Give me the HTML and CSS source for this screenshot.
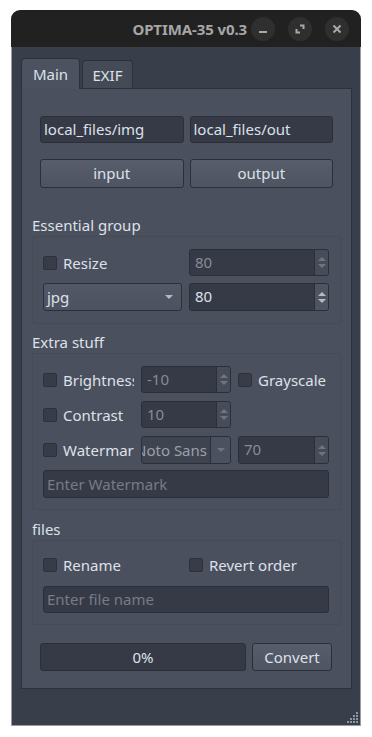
FILE: index.html
```html
<!DOCTYPE html>
<html>
<head>
<meta charset="utf-8">
<link rel="stylesheet" href="styles.css">
</head>
<body>
<div class="window">
  <div class="titlebar">
    <span class="title">OPTIMA-35 v0.3</span>
    <div class="wbtns">
      <span class="wbtn"><svg width="24" height="24" viewBox="0 0 24 24"><rect x="8" y="14" width="8" height="2" fill="#a9a9a9"/></svg></span>
      <span class="wbtn"><svg width="24" height="24" viewBox="0 0 24 24"><path d="M12 8.5h3.5V12M12 15.5H8.5V12" fill="none" stroke="#a9a9a9" stroke-width="2"/></svg></span>
      <span class="wbtn"><svg width="24" height="24" viewBox="0 0 24 24"><path d="M8.5 8.5l7 7M15.5 8.5l-7 7" stroke="#a9a9a9" stroke-width="2"/></svg></span>
    </div>
  </div>
  <div class="body">
    <div class="tabs">
      <div class="tab active">Main</div>
      <div class="tab">EXIF</div>
    </div>
    <div class="panel">
      <div class="row2 pad8">
        <div class="field">local_files/img</div>
        <div class="field">local_files/out</div>
      </div>
      <div class="row2 pad8 btnrow">
        <div class="btn">input</div>
        <div class="btn">output</div>
      </div>

      <div class="glabel first">Essential group</div>
      <div class="gframe ess">
        <div class="grid2 h27">
          <label class="check"><span class="box"></span><span class="ctext">Resize</span></label>
          <div class="spin disabled"><span class="sval">80</span><span class="arrows"><i class="up"></i><i class="down"></i></span></div>
        </div>
        <div class="grid2 h28">
          <div class="combo"><span class="cval">jpg</span><i class="carrow"></i></div>
          <div class="spin"><span class="sval">80</span><span class="arrows"><i class="up"></i><i class="down"></i></span></div>
        </div>
      </div>

      <div class="glabel">Extra stuff</div>
      <div class="gframe extra">
        <div class="grid3 h27">
          <label class="check"><span class="box"></span><span class="ctext">Brightness</span></label>
          <div class="spin disabled"><span class="sval">-10</span><span class="arrows"><i class="up"></i><i class="down"></i></span></div>
          <label class="check"><span class="box"></span><span class="ctext">Grayscale</span></label>
        </div>
        <div class="grid3 h27">
          <label class="check"><span class="box"></span><span class="ctext">Contrast</span></label>
          <div class="spin disabled"><span class="sval">10</span><span class="arrows"><i class="up"></i><i class="down"></i></span></div>
        </div>
        <div class="grid3 h28 g6">
          <label class="check"><span class="box"></span><span class="ctext">Watermark</span></label>
          <div class="combo disabled"><span class="cclip"><span>Noto Sans</span></span><span class="cbtn"><i class="carrow"></i></span></div>
          <div class="spin disabled"><span class="sval">70</span><span class="arrows"><i class="up"></i><i class="down"></i></span></div>
        </div>
        <div class="field wide h28 placeholder">Enter Watermark</div>
      </div>

      <div class="glabel files-label">files</div>
      <div class="gframe files">
        <div class="grid2 h27">
          <label class="check"><span class="box"></span><span class="ctext">Rename</span></label>
          <label class="check"><span class="box"></span><span class="ctext">Revert order</span></label>
        </div>
        <div class="field wide placeholder">Enter file name</div>
      </div>

      <div class="bottomrow pad8">
        <div class="progress">0%</div>
        <div class="btn convert">Convert</div>
      </div>
    </div>
    <svg class="grip" width="12" height="12" viewBox="0 0 12 12" fill="#8f95a3">
      <rect x="9" y="0" width="2" height="2"/>
      <rect x="6" y="3" width="2" height="2"/><rect x="9" y="3" width="2" height="2"/>
      <rect x="3" y="6" width="2" height="2"/><rect x="6" y="6" width="2" height="2"/><rect x="9" y="6" width="2" height="2"/>
      <rect x="0" y="9" width="2" height="2"/><rect x="3" y="9" width="2" height="2"/><rect x="6" y="9" width="2" height="2"/><rect x="9" y="9" width="2" height="2"/>
    </svg>
  </div>
</div>
</body>
</html>
```
FILE: styles.css
```css
* { box-sizing: border-box; }
html, body { margin: 0; padding: 0; background: #ffffff; }
body {
  font-family: "Noto Sans", "DejaVu Sans", sans-serif;
  font-size: 15px;
  color: #dde1e8;
  padding: 10px 0 0 11px;
}
.window { width: 350px; height: 716px; display: flex; flex-direction: column; }
.titlebar {
  height: 38px;
  background: #212121;
  border-radius: 9px 9px 0 0;
  display: flex;
  align-items: center;
  justify-content: flex-end;
  padding-right: 12px;
}
.title { font-weight: bold; color: #a6a6a6; font-size: 15px; margin-right: 4px; letter-spacing: -0.1px; }
.wbtns { display: flex; gap: 13px; }
.wbtn { width: 24px; height: 24px; border-radius: 50%; background: #2f2f2f; display: block; }
.wbtn svg { display: block; }
.body {
  flex: 1;
  background: #393e4b;
  padding: 11px 10px 36px 10px;
  position: relative;
  border: 1px solid #9a9ca2;
  border-top: none;
  display: flex;
  flex-direction: column;
}
.tabs { display: flex; align-items: flex-end; gap: 2px; height: 30px; margin-left: -1px; }
.tab {
  height: 28px;
  width: 51px;
  text-align: center;
  border: 1px solid #2d313a;
  border-bottom: none;
  border-radius: 4px 4px 0 0;
  background: #454a57;
  line-height: 28px;
}
.tab.active {
  height: 31px;
  width: 59px;
  background: #4d5260;
  line-height: 30px;
  position: relative;
  z-index: 1;
  margin-bottom: -1px;
}
.panel {
  margin-left: -1px;
  width: 331px;
  height: 601px;
  background: #4b505e;
  border: 1px solid #2d313a;
  padding: 27px 10px 19px 10px;
  display: flex;
  flex-direction: column;
}
.pad8 { padding: 0 8px; }
.row2 { display: grid; grid-template-columns: 1fr 1fr; gap: 6px; }
.field {
  height: 27px;
  background: #363a46;
  border: 1px solid #2c2f38;
  border-radius: 3px;
  line-height: 25px;
  padding: 0 3px;
  white-space: nowrap;
  overflow: hidden;
  flex: none;
}
.field.h28 { height: 28px; line-height: 26px; }
.placeholder { color: #767b87; }
.btnrow { margin-top: 16px; }
.btn {
  height: 29px;
  background: linear-gradient(#585d6b, #4f5462);
  border: 1px solid #2c2f38;
  border-radius: 3px;
  text-align: center;
  line-height: 27px;
}
.glabel { height: 22px; line-height: 22px; margin-top: 7px; white-space: nowrap; flex: none; }
.glabel.first { margin-top: 26px; }
.glabel.files-label { margin-top: 8px; }
.gframe { border: 1px solid #464b58; border-radius: 2px; padding: 12px 10px; display: flex; flex-direction: column; gap: 7px; flex: none; }
.gframe.extra { gap: 8px; padding-bottom: 11px; }
.gframe.extra .g6 { margin-bottom: -2px; }
.gframe.files { padding: 10px 10px 11px; gap: 8px; }
.grid2 { display: grid; grid-template-columns: 139px 140px; gap: 7px; }
.grid3 { display: grid; grid-template-columns: 91px 90px 91px; gap: 7px; }
.h27 { height: 27px; flex: none; }
.h28 { height: 28px; flex: none; }
.check { display: flex; align-items: center; gap: 6px; overflow: hidden; white-space: nowrap; }
.box { width: 14px; height: 14px; flex: none; background: #383c48; border: 1px solid #2e313a; border-radius: 2px; }
.spin {
  display: flex;
  background: #363a46;
  border: 1px solid #2c2f38;
  border-radius: 3px;
  overflow: hidden;
}
.sval { flex: 1; line-height: 25px; padding-left: 5px; }
.arrows { width: 14px; background: #4f5461; border-left: 1px solid #2c2f38; display: flex; flex-direction: column; align-items: center; justify-content: center; gap: 3px; }
.arrows i { display: block; width: 0; height: 0; border-left: 4px solid transparent; border-right: 4px solid transparent; }
.arrows .up { border-bottom: 4px solid #b5bac4; }
.arrows .down { border-top: 4px solid #b5bac4; }
.spin.disabled .sval { color: #868b96; }
.spin.disabled .arrows { background: #474c59; }
.spin.disabled .arrows .up { border-bottom-color: #6f7481; }
.spin.disabled .arrows .down { border-top-color: #6f7481; }
.combo {
  display: flex;
  align-items: center;
  background: linear-gradient(#535866, #4d5260);
  border: 1px solid #2c2f38;
  border-radius: 3px;
  overflow: hidden;
}
.cval { flex: 1; padding-left: 3px; }
.carrow { display: block; width: 0; height: 0; border-left: 4px solid transparent; border-right: 4px solid transparent; border-top: 4px solid #b5bac4; margin-right: 8px; }
.combo.disabled { background: #3f4451; color: #9ba0aa; }
.cclip { flex: 1; overflow: hidden; display: flex; justify-content: flex-end; white-space: nowrap; padding-right: 3px; height: 100%; align-items: center; }
.cbtn { width: 20px; height: 100%; background: #4c5160; border-left: 1px solid #2c2f38; display: flex; align-items: center; justify-content: center; }
.cbtn .carrow { margin: 0; border-top-color: #6f7480; }
.field.wide { width: 286px; }
.bottomrow { margin-top: 18px; display: flex; gap: 6px; height: 28px; flex: none; }
.progress {
  width: 206px;
  background: #363a46;
  border: 1px solid #2c2f38;
  border-radius: 3px;
  text-align: center;
  line-height: 26px;
}
.btn.convert { width: 80px; height: 28px; line-height: 26px; }
.grip { position: absolute; right: 1px; bottom: 1px; }
```
